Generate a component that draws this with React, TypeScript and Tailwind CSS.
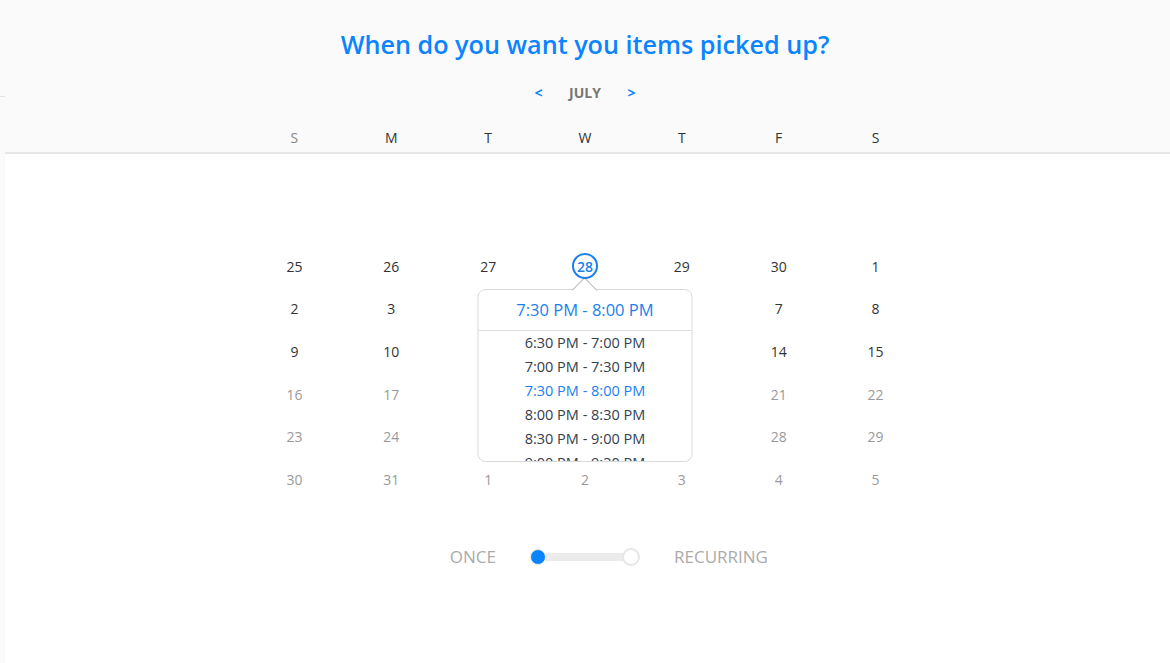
import React from "react";

const weekDays = ["S", "M", "T", "W", "T", "F", "S"];

const weeks = [
  ["25", "26", "27", "28", "29", "30", "1"],
  ["2", "3", "4", "5", "6", "7", "8"],
  ["9", "10", "11", "12", "13", "14", "15"],
  ["16", "17", "18", "19", "20", "21", "22"],
  ["23", "24", "25", "26", "27", "28", "29"],
  ["30", "31", "1", "2", "3", "4", "5"],
];

const slots = [
  "6:30 PM - 7:00 PM",
  "7:00 PM - 7:30 PM",
  "7:30 PM - 8:00 PM",
  "8:00 PM - 8:30 PM",
  "8:30 PM - 9:00 PM",
  "9:00 PM - 9:30 PM",
];

const selectedSlot = "7:30 PM - 8:00 PM";

// cells that sit under the open time list
const isHidden = (r: number, c: number) => r >= 1 && r <= 4 && c >= 2 && c <= 4;

const TimePopup = () => {
  return (
    <div className="absolute left-1/2 top-[44px] z-10 h-[173px] w-[215px] -translate-x-1/2 rounded-[8px] border border-[#d9d9d9] bg-white">
      {/* caret pointing at the chosen day */}
      <div className="absolute left-1/2 top-[-9px] h-[18px] w-[18px] -translate-x-1/2 rotate-45 border-l border-t border-[#bdbdbd] bg-white"></div>
      <div className="relative flex h-[40px] items-center justify-center text-[16.5px] text-[#1a7ff0]">
        {selectedSlot}
      </div>
      <div className="h-px bg-[#dedede]"></div>
      <div className="h-[130px] overflow-hidden rounded-b-[8px]">
        {slots.map((slot) => (
          <div
            key={slot}
            className={`h-[24px] text-center text-[14.5px] leading-[24px] ${
              slot === selectedSlot ? "text-[#1a7ff0]" : "text-[#34404e]"
            }`}
          >
            {slot}
          </div>
        ))}
      </div>
    </div>
  );
};

export default function App() {
  return (
    <div
      className="flex h-[663px] w-full bg-white"
      style={{ fontFamily: '"Open Sans", "Noto Sans", sans-serif' }}
    >
      {/* thin side strip */}
      <div className="w-[5px] shrink-0 bg-[#fafafa]">
        <div className="mt-[96px] h-px bg-[#e2e2e2]"></div>
      </div>

      <div className="flex flex-1 flex-col">
        <div className="border-b-2 border-[#e6e6e6] bg-[#fafafa] pb-[4px] pr-[5px]">
          <h1 className="pt-[26px] text-center text-[25.2px] font-semibold leading-[36px] text-[#0a84ff]">
            When do you want you items picked up?
          </h1>
          <div className="mt-[21px] flex justify-center text-[14px] font-bold leading-[20px]">
            <button className="w-[30px] text-center text-[#0a84ff]">&lt;</button>
            <div className="w-[63px] text-center text-[#777777]">JULY</div>
            <button className="w-[30px] text-center text-[#0a84ff]">&gt;</button>
          </div>
          <div className="mx-auto mt-[25px] grid w-[678px] grid-cols-7 text-[14px] leading-[20px]">
            {weekDays.map((d, i) => (
              <div
                key={i}
                className={`text-center ${i === 0 ? "text-[#888888]" : "text-[#333333]"}`}
              >
                {d}
              </div>
            ))}
          </div>
        </div>

        <div className="pr-[5px]">
          <div className="mx-auto mt-[91px] grid w-[678px] grid-cols-7 text-[14px]">
            {weeks.map((week, r) =>
              week.map((day, c) => {
                const isSelected = r === 0 && c === 3;
                return (
                  <div
                    key={`${r}-${c}`}
                    className="relative flex h-[42.67px] items-center justify-center"
                  >
                    {isSelected ? (
                      <>
                        <div className="relative z-20 flex h-[26px] w-[26px] items-center justify-center rounded-full border-2 border-[#1a7ff0] bg-white text-[14px] font-semibold text-[#1a7ff0]">
                          {day}
                        </div>
                        <TimePopup />
                      </>
                    ) : isHidden(r, c) ? null : (
                      <span className={r < 3 ? "text-[#333333]" : "text-[#9a9a9a]"}>
                        {day}
                      </span>
                    )}
                  </div>
                );
              })
            )}
          </div>

          <div className="mt-[44px] grid grid-cols-[1fr_110px_1fr] items-center gap-x-[34px] text-[17px] leading-[24px] text-[#ababab]">
            <div className="text-right">ONCE</div>
            <div className="relative flex h-[18px] items-center">
              <div className="mx-[8px] h-[8px] flex-1 bg-[#ebebeb]"></div>
              <div className="absolute left-0 top-[1px] h-[16px] w-[16px] rounded-full border border-[#f4ead6] bg-[#0a84ff]"></div>
              <div className="absolute right-0 top-0 h-[18px] w-[18px] rounded-full border-2 border-[#e6e6e6] bg-white"></div>
            </div>
            <div className="text-left">RECURRING</div>
          </div>
        </div>
      </div>
    </div>
  );
}
